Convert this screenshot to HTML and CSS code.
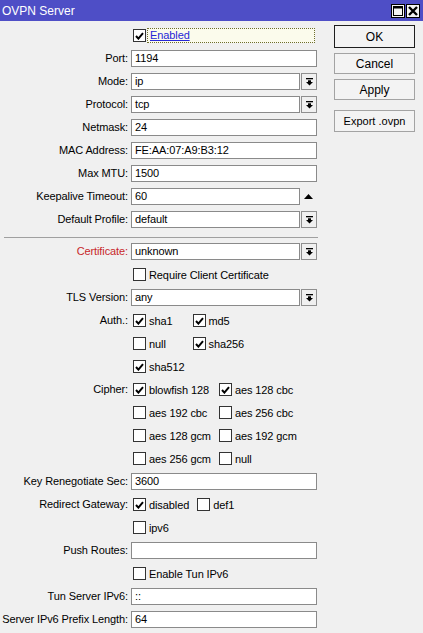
FILE: index.html
```html
<!DOCTYPE html>
<html>
<head>
<meta charset="utf-8">
<link rel="stylesheet" href="styles.css">
</head>
<body>
<div class="window">
  <div class="titlebar">
    <span class="title">OVPN Server</span>
    <div class="wbtns">
      <span class="wbtn"><svg width="12" height="12" viewBox="0 0 12 12"><rect x="1.5" y="1.5" width="9" height="9" fill="none" stroke="#000" stroke-width="1"/><rect x="1" y="1" width="10" height="2.5" fill="#000"/></svg></span>
      <span class="wbtn"><svg width="12" height="12" viewBox="0 0 12 12"><path d="M2 2 L10 10 M10 2 L2 10" stroke="#000" stroke-width="2.4"/></svg></span>
    </div>
  </div>
  <div class="content">
    <div class="form">
      <div class="row"><span class="lbl"></span><div class="val"><span class="cb on"></span><span class="focus">Enabled</span></div></div>
      <div class="row"><span class="lbl">Port:</span><div class="val"><span class="inp">1194</span></div></div>
      <div class="row"><span class="lbl">Mode:</span><div class="val"><span class="inp">ip</span><span class="dd"></span></div></div>
      <div class="row"><span class="lbl">Protocol:</span><div class="val"><span class="inp">tcp</span><span class="dd"></span></div></div>
      <div class="row"><span class="lbl">Netmask:</span><div class="val"><span class="inp">24</span></div></div>
      <div class="row"><span class="lbl">MAC Address:</span><div class="val"><span class="inp">FE:AA:07:A9:B3:12</span></div></div>
      <div class="row"><span class="lbl">Max MTU:</span><div class="val"><span class="inp">1500</span></div></div>
      <div class="row"><span class="lbl">Keepalive Timeout:</span><div class="val"><span class="inp">60</span><span class="up"></span></div></div>
      <div class="row"><span class="lbl">Default Profile:</span><div class="val"><span class="inp">default</span><span class="dd"></span></div></div>
      <div class="sep"></div>
      <div class="row"><span class="lbl red">Certificate:</span><div class="val"><span class="inp">unknown</span><span class="dd"></span></div></div>
      <div class="row"><span class="lbl"></span><div class="val"><span class="cb"></span><span class="cbt">Require Client Certificate</span></div></div>
      <div class="row"><span class="lbl">TLS Version:</span><div class="val"><span class="inp">any</span><span class="dd"></span></div></div>
      <div class="row"><span class="lbl">Auth.:</span>
        <div class="checks">
          <div class="ck"><span class="cb on"></span><span class="cbt">sha1</span></div>
          <div class="ck"><span class="cb on"></span><span class="cbt">md5</span></div>
          <div class="ck"><span class="cb"></span><span class="cbt">null</span></div>
          <div class="ck"><span class="cb on"></span><span class="cbt">sha256</span></div>
          <div class="ck"><span class="cb on"></span><span class="cbt">sha512</span></div>
        </div>
      </div>
      <div class="row"><span class="lbl">Cipher:</span>
        <div class="checks">
          <div class="ck"><span class="cb on"></span><span class="cbt">blowfish 128</span></div>
          <div class="ck"><span class="cb on"></span><span class="cbt">aes 128 cbc</span></div>
          <div class="ck"><span class="cb"></span><span class="cbt">aes 192 cbc</span></div>
          <div class="ck"><span class="cb"></span><span class="cbt">aes 256 cbc</span></div>
          <div class="ck"><span class="cb"></span><span class="cbt">aes 128 gcm</span></div>
          <div class="ck"><span class="cb"></span><span class="cbt">aes 192 gcm</span></div>
          <div class="ck"><span class="cb"></span><span class="cbt">aes 256 gcm</span></div>
          <div class="ck"><span class="cb"></span><span class="cbt">null</span></div>
        </div>
      </div>
      <div class="row"><span class="lbl">Key Renegotiate Sec:</span><div class="val"><span class="inp">3600</span></div></div>
      <div class="row"><span class="lbl">Redirect Gateway:</span>
        <div class="checks">
          <div class="ck"><span class="cb on"></span><span class="cbt">disabled</span></div>
          <div class="ck"><span class="cb"></span><span class="cbt">def1</span></div>
          <div class="ck"><span class="cb"></span><span class="cbt">ipv6</span></div>
        </div>
      </div>
      <div class="row"><span class="lbl">Push Routes:</span><div class="val"><span class="inp"></span></div></div>
      <div class="row"><span class="lbl"></span><div class="val"><span class="cb"></span><span class="cbt">Enable Tun IPv6</span></div></div>
      <div class="row"><span class="lbl">Tun Server IPv6:</span><div class="val"><span class="inp">::</span></div></div>
      <div class="row"><span class="lbl">Server IPv6 Prefix Length:</span><div class="val"><span class="inp">64</span></div></div>
    </div>
    <div class="actions">
      <span class="btn ok">OK</span>
      <span class="btn">Cancel</span>
      <span class="btn">Apply</span>
      <span class="btn export">Export .ovpn</span>
    </div>
  </div>
</div>
</body>
</html>
```

FILE: styles.css
```css
html, body {
  margin: 0;
  padding: 0;
  background: #f0f0f0;
}
body {
  font-family: "Liberation Sans", Arial, sans-serif;
  font-size: 11px;
  letter-spacing: -0.1px;
  color: #000;
}
.window {
  width: 423px;
  height: 633px;
  overflow: hidden;
  background: #f0f0f0;
}
.titlebar {
  height: 21px;
  background: #4e4ec6;
  display: flex;
  align-items: center;
  justify-content: space-between;
  padding: 0 3px 0 2px;
  box-sizing: border-box;
}
.title {
  color: #fff;
  font-size: 12px;
  letter-spacing: 0;
}
.wbtns {
  display: flex;
  gap: 1px;
}
.wbtn {
  width: 14px;
  height: 14px;
  box-sizing: border-box;
  border: 1px solid #000;
  background: #f4f4f4;
  display: flex;
  align-items: center;
  justify-content: center;
}
.wbtn svg { display: block; }
.content {
  display: flex;
  align-items: flex-start;
  padding-top: 3px;
}
.form {
  width: 318px;
}
.row {
  display: grid;
  grid-template-columns: 128px 186px;
  column-gap: 3px;
}
.lbl {
  height: 23px;
  line-height: 23px;
  text-align: right;
  white-space: nowrap;
}
.lbl.red { color: #c8282a; }
.val {
  height: 23px;
  display: flex;
  align-items: center;
}
.inp {
  flex: 1;
  height: 17px;
  box-sizing: border-box;
  border: 1px solid #8a8a8a;
  background: #fff;
  padding-left: 3px;
  line-height: 15px;
  white-space: nowrap;
  overflow: hidden;
}
.dd {
  width: 16px;
  height: 17px;
  box-sizing: border-box;
  margin-left: 1px;
  border: 1px solid #8f8f8f;
  background: #f0f0f0 no-repeat center / 7px 8px;
  background-image: url("data:image/svg+xml,%3Csvg xmlns='http://www.w3.org/2000/svg' width='7' height='8' viewBox='0 0 7 8'%3E%3Crect x='0' y='0' width='7' height='1.3' fill='%23000'/%3E%3Crect x='2' y='2.3' width='3' height='2' fill='%23000'/%3E%3Cpolygon points='0,4 7,4 3.5,7.6' fill='%23000'/%3E%3C/svg%3E");
}
.up {
  width: 17px;
  height: 17px;
  background: no-repeat center / 9px 5px;
  background-image: url("data:image/svg+xml,%3Csvg xmlns='http://www.w3.org/2000/svg' width='9' height='5' viewBox='0 0 9 5'%3E%3Cpolygon points='0,5 9,5 4.5,0' fill='%23000'/%3E%3C/svg%3E");
}
.cb {
  width: 13px;
  height: 13px;
  flex: none;
  box-sizing: border-box;
  border: 1px solid #333;
  background: #fff;
  margin-left: 2px;
}
.cb.on {
  background: #fff no-repeat center / 9px 8px;
  background-image: url("data:image/svg+xml,%3Csvg xmlns='http://www.w3.org/2000/svg' width='9' height='8' viewBox='0 0 9 8'%3E%3Cpath d='M1 4 L3.4 6.6 L8 1.2' fill='none' stroke='%23000' stroke-width='2'/%3E%3C/svg%3E");
}
.cbt {
  margin-left: 3px;
  white-space: nowrap;
}
.focus {
  flex: 1;
  margin-left: 1px;
  margin-right: 2px;
  height: 15px;
  box-sizing: border-box;
  border: 1px dotted #6d6d2e;
  background: #fbfbec;
  color: #2626d6;
  text-decoration: underline;
  padding-left: 2px;
  line-height: 13px;
}
.checks {
  display: grid;
  grid-template-columns: auto auto;
  justify-content: start;
  column-gap: 6px;
  grid-auto-rows: 23px;
}
.ck {
  display: flex;
  align-items: center;
}
.sep {
  height: 1px;
  background: #a0a0a0;
  margin: 6px 0 2px 4px;
}
.actions {
  margin-left: 16px;
  width: 81px;
  display: flex;
  flex-direction: column;
  gap: 5px;
  padding-top: 1px;
}
.btn {
  height: 21px;
  box-sizing: border-box;
  border: 1px solid #a3a3a3;
  background: #f3f3f3;
  display: flex;
  align-items: center;
  justify-content: center;
  font-size: 12px;
  letter-spacing: 0;
}
.btn.ok {
  height: 23px;
  border: 1px solid #1e1e1e;
}
.btn.export {
  margin-top: 5px;
  height: 22px;
  font-size: 11px;
}
```
